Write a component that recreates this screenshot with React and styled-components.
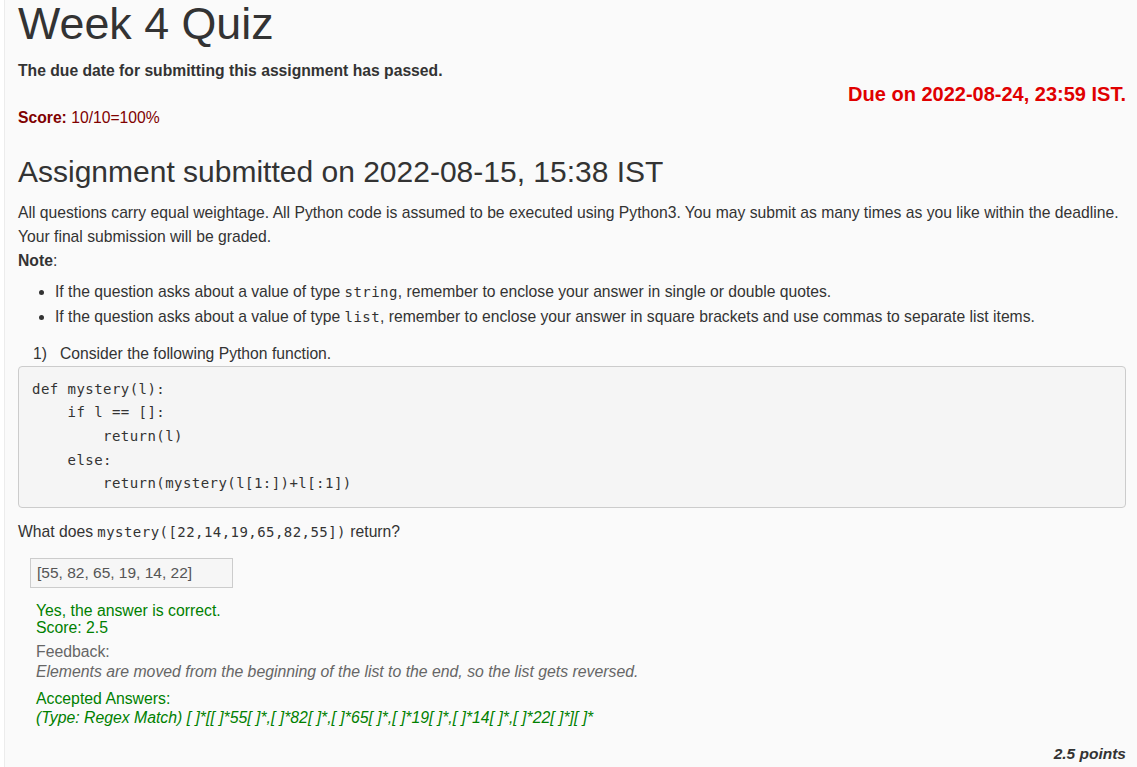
import React from "react";
import styled, { createGlobalStyle } from "styled-components";

const Global = createGlobalStyle`
  html, body { margin: 0; padding: 0; background: #ffffff; }
  body { font-family: "Liberation Sans", Arial, sans-serif; color: #333; }
`;

const Page = styled.div`
  margin-left: 4px;
  border-left: 1px solid #ececec;
  background: #fafafa;
  min-height: 767px;
  padding: 0 10px 0 13px;
  box-sizing: border-box;
`;

const Title = styled.h1`
  margin: 0;
  font-size: 44.8px;
  line-height: 46px;
  font-weight: 400;
  color: #333;
`;

const HeaderRow = styled.div`
  display: flex;
  justify-content: space-between;
  align-items: flex-start;
  margin-top: 15px;
  padding-right: 1px;
`;

const HeaderLeft = styled.div`
  display: flex;
  flex-direction: column;
  gap: 27px;
`;

const Passed = styled.div`
  font-size: 15.7px;
  line-height: 20px;
  font-weight: 700;
  color: #333;
`;

const ScoreLine = styled.div`
  font-size: 15.7px;
  line-height: 20px;
  color: #800000;
  b { font-weight: 700; }
`;

const Due = styled.div`
  margin-top: 21px;
  font-size: 20px;
  line-height: 24px;
  font-weight: 700;
  color: #e00000;
`;

const Heading = styled.h2`
  margin: 26px 0 0;
  font-size: 30px;
  line-height: 36px;
  font-weight: 400;
  color: #333;
`;

const Para = styled.div`
  margin-top: ${(p) => p.$mt || 0}px;
  font-size: 15.7px;
  line-height: 24px;
  color: #333;
  b { font-weight: 700; }
`;

const Code = styled.code`
  font-family: "DejaVu Sans Mono", monospace;
  font-size: 14px;
  letter-spacing: 0.45px;
  color: #333;
`;

const List = styled.ul`
  margin: 7px 0 0;
  padding-left: 37px;
  font-size: 15.7px;
  line-height: 24px;
  li + li { margin-top: 0.5px; }
`;

const Question = styled.div`
  margin-top: 13px;
  display: flex;
  font-size: 15.7px;
  line-height: 24px;
  padding-left: 15px;
`;

const QNum = styled.span`
  width: 27px;
`;

const CodeBlock = styled.pre`
  margin: 0 1px 0 0;
  padding: 11px 13px;
  background: #f5f5f5;
  border: 1px solid #cccccc;
  border-radius: 4px;
  font-family: "DejaVu Sans Mono", monospace;
  font-size: 14px;
  letter-spacing: 0.45px;
  line-height: 23.7px;
  color: #333;
  white-space: pre;
`;

const AnswerBox = styled.div`
  margin: 14px 0 0 12px;
  width: 203px;
  height: 30px;
  box-sizing: border-box;
  border: 1px solid #cccccc;
  background: #f6f6f6;
  padding: 0 6px;
  font-size: 15.5px;
  line-height: 28px;
  color: #555;
`;

const Result = styled.div`
  margin: 14px 0 0 18px;
  display: flex;
  flex-direction: column;
`;

const Line = styled.div`
  font-size: 15.8px;
  line-height: 17px;
  color: ${(p) => (p.$tone === "green" ? "#008000" : "#666")};
  font-style: ${(p) => (p.$italic ? "italic" : "normal")};
  margin-top: ${(p) => p.$mt || 0}px;
`;

const Points = styled.div`
  margin-top: 18px;
  padding-right: 1px;
  text-align: right;
  font-size: 15.5px;
  line-height: 20px;
  font-weight: 700;
  font-style: italic;
  color: #333;
`;

const code = `def mystery(l):
    if l == []:
        return(l)
    else:
        return(mystery(l[1:])+l[:1])`;

export default function App() {
  return (
    <>
      <Global />
      <Page>
        <Title>Week 4 Quiz</Title>
        <HeaderRow>
          <HeaderLeft>
            <Passed>The due date for submitting this assignment has passed.</Passed>
            <ScoreLine>
              <b>Score:</b> 10/10=100%
            </ScoreLine>
          </HeaderLeft>
          <Due>Due on 2022-08-24, 23:59 IST.</Due>
        </HeaderRow>
        <Heading>Assignment submitted on 2022-08-15, 15:38 IST</Heading>
        <Para $mt={11}>
          All questions carry equal weightage. All Python code is assumed to be executed using Python3. You may submit as many times as you like within the deadline. Your final submission will be graded.
          <br />
          <b>Note</b>:
        </Para>
        <List>
          <li>
            If the question asks about a value of type <Code>string</Code>, remember to enclose your answer in single or double quotes.
          </li>
          <li>
            If the question asks about a value of type <Code>list</Code>, remember to enclose your answer in square brackets and use commas to separate list items.
          </li>
        </List>
        <Question>
          <QNum>1)</QNum>
          <span>Consider the following Python function.</span>
        </Question>
        <CodeBlock>{code}</CodeBlock>
        <Para $mt={12}>
          What does <Code>mystery([22,14,19,65,82,55])</Code> return?
        </Para>
        <AnswerBox>[55, 82, 65, 19, 14, 22]</AnswerBox>
        <Result>
          <Line $tone="green">Yes, the answer is correct.</Line>
          <Line $tone="green">Score: 2.5</Line>
          <Line $mt={7}>Feedback:</Line>
          <Line $italic $mt={3}>Elements are moved from the beginning of the list to the end, so the list gets reversed.</Line>
          <Line $tone="green" $mt={10}>Accepted Answers:</Line>
          <Line $tone="green" $italic $mt={2}>(Type: Regex Match) [ ]*[[ ]*55[ ]*,[ ]*82[ ]*,[ ]*65[ ]*,[ ]*19[ ]*,[ ]*14[ ]*,[ ]*22[ ]*][ ]*</Line>
        </Result>
        <Points>2.5 points</Points>
      </Page>
    </>
  );
}
